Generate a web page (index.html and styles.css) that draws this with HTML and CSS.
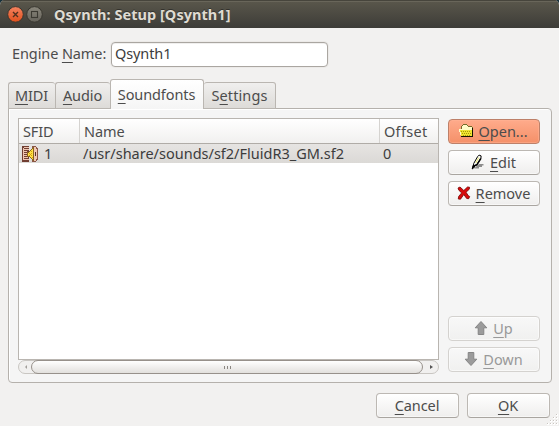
FILE: index.html
```html
<!DOCTYPE html>
<html lang="en">
<head>
<meta charset="utf-8">
<title>Qsynth: Setup</title>
<link rel="stylesheet" href="styles.css">
</head>
<body>
<div class="window">
  <header class="titlebar">
    <svg class="controls" width="38" height="18" viewBox="0 0 38 18">
      <defs>
        <linearGradient id="close" x1="0" y1="0" x2="0" y2="1"><stop offset="0" stop-color="#f58360"/><stop offset="1" stop-color="#e0501c"/></linearGradient>
        <linearGradient id="max" x1="0" y1="0" x2="0" y2="1"><stop offset="0" stop-color="#8a877c"/><stop offset="1" stop-color="#65625a"/></linearGradient>
      </defs>
      <circle cx="8.5" cy="9.4" r="7.8" fill="url(#close)" stroke="#38362f"/>
      <path d="M6 7l5 5M11 7l-5 5" stroke="#50301e" stroke-width="1.4"/>
      <circle cx="27.5" cy="9.4" r="7.8" fill="url(#max)" stroke="#38362f"/>
      <rect x="24.5" y="6.5" width="6" height="6" fill="none" stroke="#3b3932" stroke-width="1.1"/>
    </svg>
    <h1>Qsynth: Setup [Qsynth1]</h1>
  </header>

  <div class="name-row">
    <label for="engine">Engine <u>N</u>ame:</label>
    <input id="engine" type="text" value="Qsynth1">
  </div>

  <nav class="tabs">
    <div class="tab midi"><span><u>M</u>IDI</span></div>
    <div class="tab audio"><span><u>A</u>udio</span></div>
    <div class="tab active"><span><u>S</u>oundfonts</span></div>
    <div class="tab settings"><span>S<u>e</u>ttings</span></div>
  </nav>

  <main class="pane">
    <section class="list">
      <div class="view">
        <div class="row head"><span>SFID</span><span>Name</span><span class="offset">Offset</span></div>
        <div class="row item">
          <span class="id"><svg width="16" height="16" viewBox="0 0 16 16" shape-rendering="crispEdges">
            <path d="M0 0h7v16H0z" fill="#713e32"/>
            <path d="M2 1h5v1H2zM1 3h6v1H1zM2 5h3v1H2zM1 7h4v1H1zM2 9h3v1H2zM1 11h5v1H1zM2 13h5v1H2zM1 2h1v12H1z" fill="#edc4b0"/>
            <path d="M10 0h4l2 3v10l-2 3h-4z" fill="#8a5546"/>
            <path d="M11 1h3l1 3v8l-1 3h-3z" fill="#f0c8b5"/>
            <path d="M5 6h2l4-4v12l-4-4H5z" fill="#ffe245" stroke="#8a6420"/>
            <path d="M7 7h1v1H7zM8 8h1v1H8zM9 7h1v1H9zM9 9h1v1H9zM9 5h1v1H9zM10 11h1v1h-1zM7 9h1v1H7z" fill="#d69e10"/>
            <path d="M13 6h1v4h-1z" fill="#55332a"/>
          </svg>1</span>
          <span class="path">/usr/share/sounds/sf2/FluidR3_GM.sf2</span><span class="zero">0</span>
        </div>
      </div>
      <div class="scroll">
        <i class="arrow left"></i>
        <div class="thumb"><i></i><i></i><i></i></div>
        <i class="arrow right"></i>
      </div>
    </section>
    <aside class="actions">
      <button class="btn open"><svg width="16" height="16" viewBox="0 0 16 16" shape-rendering="crispEdges">
        <path d="M3 3h1V2h1V1h4v1h1v1h4v1h1v10H3z" fill="#776c2a"/>
        <path d="M4 3h1V2h4v1h1v1h4v3H4z" fill="#fffbc8"/>
        <path d="M1 6h12v1h1v6H3v-1H2V9H1z" fill="#eee431"/>
        <path d="M1 6h12v1H1zM1 7h1v2H1zM2 9h1v3H2z" fill="#fffbc8"/>
        <path d="M3 8h1v1H3zM5 8h1v1H5zM7 8h1v1H7zM9 8h1v1H9zM11 8h1v1h-1zM4 10h1v1H4zM6 10h1v1H6zM8 10h1v1H8zM10 10h1v1h-1zM12 10h1v1h-1zM5 12h1v1H5zM7 12h1v1H7zM9 12h1v1H9zM11 12h1v1h-1z" fill="#a69b08"/>
        <path d="M3 13h11V5h1v9H3z" fill="#171400"/>
      </svg><span><u>O</u>pen...</span></button>
      <button class="btn edit"><svg width="16" height="16" viewBox="0 0 16 16">
        <path d="M4 14.5l5-4.5h4.5v1.5H12V13H9v1.5z" fill="#8d8d8d"/>
        <path d="M3.4 11.8l.3-2.3 4-7 1.4-1.4 2 .8-.2 2.6-4 6z" fill="#fff" stroke="#000" stroke-width="1"/>
        <path d="M10.8 4.5l-4 6.4-3 1.2" fill="none" stroke="#000" stroke-width="1.5"/>
        <path d="M8.8 3.5l-3 5.5" stroke="#e9e96a"/>
        <path d="M2.2 15l.8-3.6 2 1.2z" stroke="#000"/>
      </svg><span><u>E</u>dit</span></button>
      <button class="btn remove"><svg width="16" height="16" viewBox="0 0 16 16">
        <path d="M2 3l2-1 3.8 3.5L11.5 2l2 .2-.2 2L10 7.3l2.4 3.5 1.3.7-1 2.2-2-.2-2.9-4-3.3 4.7-2.2-.2.3-2.5 3.1-3.6L2.8 5.2z" fill="#d90b0b" stroke="#760000" stroke-width=".8"/>
      </svg><span><u>R</u>emove</span></button>
      <div class="spacer"></div>
      <button class="btn up" disabled><svg width="16" height="16" viewBox="0 0 16 16">
        <path d="M8 1.5l5.8 6.3h-3v6.7H5.2V7.8h-3z" fill="#9b9b9b" stroke="#858585"/>
      </svg><span><u>U</u>p</span></button>
      <button class="btn down" disabled><svg width="16" height="16" viewBox="0 0 16 16">
        <path d="M8 14.5l5.8-6.3h-3V1.5H5.2v6.7h-3z" fill="#9b9b9b" stroke="#858585"/>
      </svg><span><u>D</u>own</span></button>
    </aside>
  </main>

  <footer class="footer">
    <button class="btn cancel"><span><u>C</u>ancel</span></button>
    <button class="btn ok"><span><u>O</u>K</span></button>
  </footer>
  <svg class="grip" width="12" height="12" viewBox="0 0 12 12" shape-rendering="crispEdges">
    <path d="M9 1h2v2H9zM6 4h2v2H6zM9 4h2v2H9zM3 7h2v2H3zM6 7h2v2H6zM9 7h2v2H9zM0 10h2v2H0zM3 10h2v2H3zM6 10h2v2H6zM9 10h2v2H9z" fill="#fff"/>
    <path d="M9 1h1v1H9zM6 4h1v1H6zM9 4h1v1H9zM3 7h1v1H3zM6 7h1v1H6zM9 7h1v1H9zM0 10h1v1H0zM3 10h1v1H3zM6 10h1v1H6zM9 10h1v1H9z" fill="#c9c5c0"/>
  </svg>
</div>
</body>
</html>
```
FILE: styles.css
```css
* { box-sizing: border-box; }
body { margin: 0; background: #17313b; overflow: hidden; }
.window {
  position: relative;
  display: flex;
  flex-direction: column;
  width: 559px;
  height: 426px;
  background: #f2f1f0;
  border-radius: 5px 5px 0 0;
  overflow: hidden;
  color: #4c4c4c;
  font: 14.5px/20px "Noto Sans", "Open Sans", sans-serif;
  letter-spacing: -0.1px;
}
u { text-decoration: underline; text-decoration-thickness: 1px; text-underline-offset: 3px; text-decoration-skip-ink: none; }
.titlebar {
  display: flex;
  align-items: center;
  height: 28px;
  padding-left: 7px;
  background: linear-gradient(#5b584c, #3d3c38);
  box-shadow: inset 0 1px #47453c, inset 0 2px #69665a;
}
.titlebar h1 { margin: 0 0 0 9px; font-size: 14.5px; line-height: 20px; color: #dfdbd2; letter-spacing: 0.05px; text-shadow: 0 -1px #33322d; }
.name-row { display: flex; align-items: center; height: 26px; margin: 13px 0 0 12px; }
.name-row label { width: 99px; padding-bottom: 2px; white-space: nowrap; }
.name-row input {
  width: 217px;
  height: 25px;
  padding: 0 4px 2px 3px;
  border: 1px solid #aaa6a1;
  border-radius: 4px;
  outline: 0;
  background: #fff;
  color: #3c3c3c;
  font: inherit;
  letter-spacing: inherit;
  box-shadow: 0 0 0 1px #eceae8, inset 0 1px #f0efee;
}
.tabs { display: flex; align-items: flex-end; height: 30px; margin: 12px 0 0 8px; z-index: 1; }
.tab {
  display: flex;
  justify-content: center;
  height: 27px;
  padding: 2px 1px 0 0;
  border: 1px solid #bab6b1;
  border-right: 0;
  border-radius: 3px 3px 0 0;
  background: linear-gradient(#f0efee, #dddbd8);
}
.midi { width: 47px; }
.audio { width: 55px; }
.active { width: 94px; height: 30px; padding-top: 4px; border-right: 1px solid #bab6b1; border-bottom: 0; background: linear-gradient(#fff, #f5f5f5); }
.settings { width: 72px; padding-right: 0; border-left: 0; border-right: 1px solid #bab6b1; letter-spacing: 0.1px; }
.pane {
  display: flex;
  justify-content: space-between;
  width: 544px;
  height: 275px;
  margin: -1px 0 0 8px;
  padding: 9px 11px 9px 9px;
  border: 1px solid #b5b1ac;
  border-radius: 0 4px 4px 4px;
  background: #f5f5f5;
  box-shadow: inset 1px 1px #fff;
}
.list { width: 421px; }
.view { height: 242px; border: 1px solid #b9b5b0; background: #fff; color: #3c3c3c; }
.row { display: grid; grid-template-columns: 61px 300px 1fr; }
.head { height: 25px; border-bottom: 1px solid #b0aca7; background: linear-gradient(#fff, #f1f0ef); color: #4c4c4c; }
.head span { padding: 2px 0 0 4px; border-right: 1px solid #d5d3d0; }
.head span:last-child { border: 0; }
.head .offset { letter-spacing: 0.3px; }
.item { height: 19px; background: linear-gradient(#e6e4e2, #dbd9d6); line-height: 19px; }
.item span { padding-left: 3px; white-space: nowrap; }
.item .id { display: flex; align-items: center; gap: 6px; padding-left: 3px; }
.item .path { letter-spacing: 0; }
.scroll { display: flex; align-items: center; height: 14px; border: 1px solid #c9c6c2; border-radius: 7px; background: #f1f0ef; }
.thumb {
  display: flex;
  flex: none;
  align-items: center;
  justify-content: center;
  gap: 2px;
  width: 392px;
  height: 14px;
  margin: 0 6px 0 4px;
  border: 1px solid #97918b;
  border-radius: 7px;
  background: linear-gradient(#fff, #e2e0dd);
}
.thumb i { width: 1px; height: 3px; background: #8b8782; }
.arrow { flex: none; border: 2.5px solid transparent; border-width: 2.5px 0; }
.left { margin-left: 6px; border-right: 2px solid #a19e9a; }
.right { margin-left: 1px; border-left: 3px solid #555; }
.actions { display: flex; flex-direction: column; gap: 6px; width: 92px; padding: 1px 0; }
.spacer { flex: 1; }
.btn {
  display: flex;
  justify-content: center;
  align-items: center;
  gap: 4px;
  height: 25px;
  padding: 0 1px 1px 0;
  flex: none;
  border: 1px solid #bcb8b3;
  border-bottom-color: #a9a5a0;
  border-radius: 4px;
  background: linear-gradient(#fff, #efeeed);
  color: #4c4c4c;
  font: inherit;
  letter-spacing: inherit;
  box-shadow: inset 0 0 0 1px rgba(255,255,255,.5);
}
.actions .btn { gap: 4px; padding-right: 2px; letter-spacing: 0; }
.open { border-color: #bd8069; background: linear-gradient(#ffab8b, #f49069); box-shadow: inset 0 0 0 1px rgba(255,180,150,.5); }
.btn:disabled { border-color: #d4d2cf; background: linear-gradient(#f8f8f8, #f0f0ef); color: #999; }
.footer { display: flex; justify-content: flex-end; gap: 8px; margin: 10px 9px 0 0; }
.footer .btn { width: 83px; }
.grip { position: absolute; right: 0; bottom: 1px; }
```
